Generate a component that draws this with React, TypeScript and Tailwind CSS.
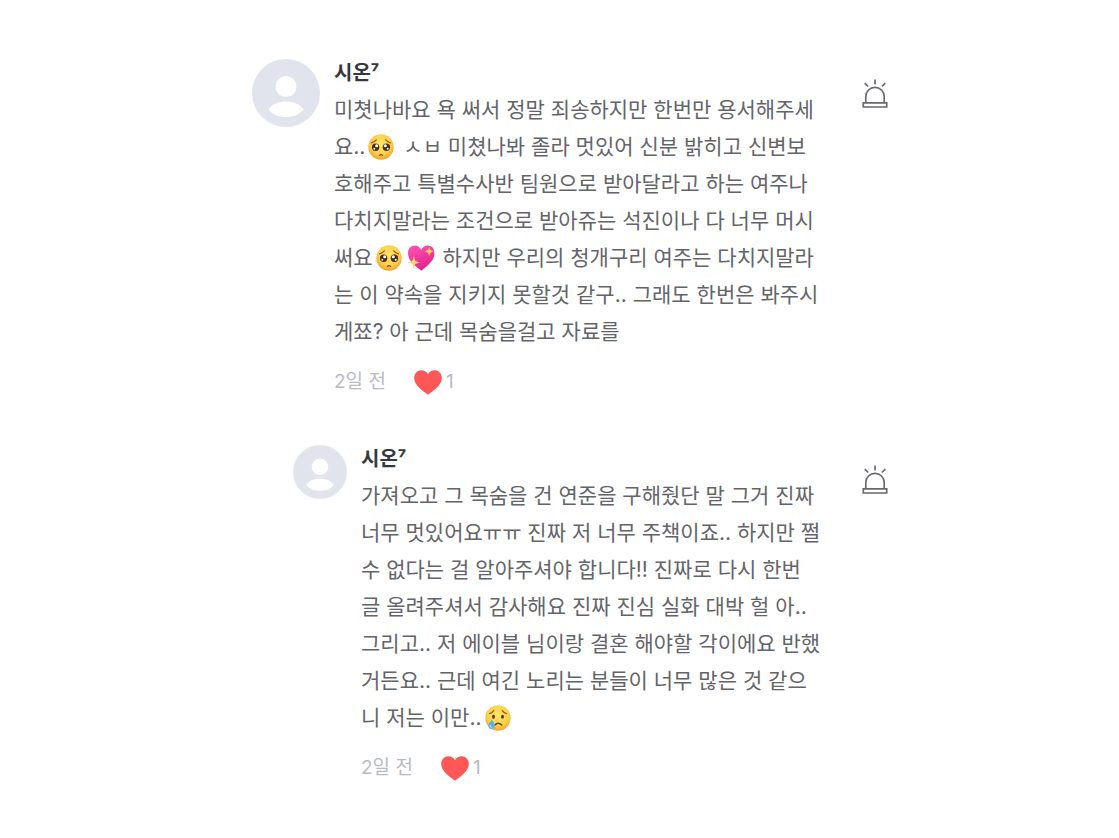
import type { ReactNode } from 'react';

/** Yellow face with pleading eyes */
function PleadingFace() {
  return (
    <svg
      viewBox="0 0 26 26"
      role="img"
      aria-label="애원하는 얼굴"
      className="mx-[3px] inline-block h-[26px] w-[26px] align-[-6px]"
    >
      <defs>
        <radialGradient id="pleading-skin" cx="0.5" cy="0.4" r="0.6">
          <stop offset="0" stopColor="#ffe56a" />
          <stop offset="0.65" stopColor="#ffd04a" />
          <stop offset="1" stopColor="#f0a02c" />
        </radialGradient>
      </defs>
      <circle cx="13" cy="13" r="12.7" fill="url(#pleading-skin)" />
      <path
        d="M3.5 8.8Q6.3 8.2 8.3 5.8M22.5 8.8Q19.7 8.2 17.7 5.8"
        fill="none"
        stroke="#8f5a1c"
        strokeWidth="1.2"
        strokeLinecap="round"
      />
      <circle cx="7.6" cy="13.3" r="3.7" fill="#4b2d14" />
      <circle cx="18.4" cy="13.3" r="3.7" fill="#4b2d14" />
      <circle cx="8.7" cy="11.8" r="1.5" fill="#fff" />
      <circle cx="17.3" cy="11.8" r="1.5" fill="#fff" />
      <circle cx="6.3" cy="14.8" r="1" fill="#fff" />
      <circle cx="19.7" cy="14.8" r="1" fill="#fff" />
      <path
        d="M11.4 21.4Q13 19.9 14.6 21.4"
        fill="none"
        stroke="#7a431a"
        strokeWidth="1.2"
        strokeLinecap="round"
      />
    </svg>
  );
}

/** Pink heart with two gold sparkles */
function SparklingHeart() {
  return (
    <svg
      viewBox="0 0 28 26"
      role="img"
      aria-label="반짝이는 하트"
      className="mx-0.5 inline-block h-[26px] w-[28px] align-[-6px]"
    >
      <defs>
        <linearGradient id="sparkle-fill" x1="0" y1="0" x2="0.4" y2="1">
          <stop offset="0" stopColor="#ff55b5" />
          <stop offset="1" stopColor="#e2248f" />
        </linearGradient>
      </defs>
      <path
        d="M14.3 25.8C11 22.6 1 17 1 8.4 1 3.6 4 .6 7.7.6c3 0 5.4 1.8 6.6 4.5C15.5 2.4 17.9.6 20.9.6c3.7 0 6.5 3 6.5 7.8 0 8.6-9.8 14.2-13.1 17.4z"
        fill="url(#sparkle-fill)"
      />
      <path
        d="M6.8 11.2l1.5 4.7 4.7 1.5-4.7 1.5-1.5 4.7-1.5-4.7-4.7-1.5 4.7-1.5z"
        fill="#ffd36b"
      />
      <path
        d="M22.2 1.8l1.4 3.1 3.1 1.4-3.1 1.4-1.4 3.1-1.4-3.1-3.1-1.4 3.1-1.4z"
        fill="#ffc45c"
      />
    </svg>
  );
}

/** Sad face with a tear on the left cheek */
function CryingFace() {
  return (
    <svg
      viewBox="0 0 26 26"
      role="img"
      aria-label="우는 얼굴"
      className="mx-[3px] inline-block h-[26px] w-[26px] align-[-6px]"
    >
      <defs>
        <radialGradient id="crying-skin" cx="0.5" cy="0.4" r="0.6">
          <stop offset="0" stopColor="#ffe56a" />
          <stop offset="0.65" stopColor="#ffd34a" />
          <stop offset="1" stopColor="#f0a62c" />
        </radialGradient>
      </defs>
      <circle cx="13" cy="13" r="12.7" fill="url(#crying-skin)" />
      <path
        d="M4.5 8.6Q7.2 7.8 8.7 5.6M21.5 8.6Q18.8 7.8 17.3 5.6"
        fill="none"
        stroke="#8f5a1c"
        strokeWidth="1.2"
        strokeLinecap="round"
      />
      <ellipse cx="8.5" cy="11.8" rx="1.5" ry="2" fill="#5b3a16" />
      <ellipse cx="17.5" cy="11.8" rx="1.5" ry="2" fill="#5b3a16" />
      <path
        d="M9.8 20Q13 16.5 16.8 20"
        fill="none"
        stroke="#6e4218"
        strokeWidth="1.5"
        strokeLinecap="round"
      />
      <path
        d="M6.8 14.5c1.5 2.3 3 4.2 3 6.3a3.2 3.2 0 0 1-6.4 0c0-2.1 1.9-4 3.4-6.3z"
        fill="#55b4e8"
      />
      <path d="M5.2 20.2a1.7 1.7 0 0 0 1.5 2.2" fill="none" stroke="#c9ecff" strokeWidth="1" />
    </svg>
  );
}

function Avatar({ className }: { className: string }) {
  return (
    <svg viewBox="0 0 68 68" aria-hidden="true" className={`shrink-0 ${className}`}>
      <circle cx="34" cy="34" r="34" fill="#e1e4ed" />
      <circle cx="34" cy="27.5" r="10.5" fill="#fff" />
      <path
        d="M16.5 50.5C19.5 45.5 26 42.5 34 42.5s14.5 3 17.5 8C47.5 55.5 41.5 58 34 58s-13.5-2.5-17.5-7.5z"
        fill="#fff"
      />
    </svg>
  );
}

function SirenIcon() {
  return (
    <svg
      viewBox="0 0 26 30"
      aria-hidden="true"
      className="h-[30px] w-[26px]"
      fill="none"
      stroke="#68686d"
      strokeWidth="1.7"
    >
      <path d="M13 .5v5M2.7 4.2l3.4 3.3M23.3 4.2l-3.4 3.3" />
      <path d="M3.8 23.8V17.500a9.2 9.2 0 0 1 18.4 0v6.3" />
      <path d="M1.3 23.8h23.4v4.2h-23.4z" />
    </svg>
  );
}

function HeartIcon() {
  return (
    <svg viewBox="0 0 28 25" aria-hidden="true" className="h-[25px] w-7" fill="#ff5656">
      <path d="M14 24.8C10.5 21.5.2 16 .2 8 .2 3.5 3.4.3 7.4.3c2.8 0 5.3 1.5 6.6 4C15.3 1.8 17.8.3 20.6.3c4 0 7.2 3.2 7.2 7.7 0 8-10.3 13.5-13.8 16.8z" />
    </svg>
  );
}

interface CommentProps {
  author: string;
  lines: ReactNode[];
  time: string;
  likes: number;
  isReply?: boolean;
}

function Comment({ author, lines, time, likes, isReply = false }: CommentProps) {
  return (
    <article className={`flex items-start gap-3.5 ${isReply ? 'pl-[41px]' : ''}`}>
      <Avatar className={isReply ? 'mt-0.5 h-[54px] w-[54px]' : 'mt-0.5 h-[68px] w-[68px]'} />

      <div className="min-w-0 flex-1">
        <h2 className="text-[20px] leading-8 font-bold text-[#37383f]">{author}</h2>
        <p className="mt-0.5 text-[21px] leading-[37px] text-[#636469]">
          {lines.map((line, index) => (
            <span key={index} className="block whitespace-nowrap">
              {line}
            </span>
          ))}
        </p>
        <div className="mt-[18px] flex items-center gap-7 text-[19px] leading-7 text-[#b9bac4]">
          <time>{time}</time>
          <button type="button" aria-label="좋아요" className="flex cursor-pointer items-center gap-1">
            <HeartIcon />
            <span>{likes}</span>
          </button>
        </div>
      </div>

      <button type="button" aria-label="신고" className="mt-[22px] shrink-0 cursor-pointer">
        <SirenIcon />
      </button>
    </article>
  );
}

const COMMENTS: CommentProps[] = [
  {
    author: '시온⁷',
    time: '2일 전',
    likes: 1,
    lines: [
      '미쳣나바요 욕 써서 정말 죄송하지만 한번만 용서해주세',
      <>요..<PleadingFace /> ㅅㅂ 미쳤나봐 졸라 멋있어 신분 밝히고 신변보</>,
      '호해주고 특별수사반 팀원으로 받아달라고 하는 여주나',
      '다치지말라는 조건으로 받아쥬는 석진이나 다 너무 머시',
      <>써요<PleadingFace /><SparklingHeart /> 하지만 우리의 청개구리 여주는 다치지말라</>,
      '는 이 약속을 지키지 못할것 같구.. 그래도 한번은 봐주시',
      '게쬬? 아 근데 목숨을걸고 자료를',
    ],
  },
  {
    author: '시온⁷',
    time: '2일 전',
    likes: 1,
    isReply: true,
    lines: [
      '가져오고 그 목숨을 건 연준을 구해줬단 말 그거 진짜',
      '너무 멋있어요ㅠㅠ 진짜 저 너무 주책이죠.. 하지만 쩔',
      '수 없다는 걸 알아주셔야 합니다!! 진짜로 다시 한번',
      '글 올려주셔서 감사해요 진짜 진심 실화 대박 헐 아..',
      '그리고.. 저 에이블 님이랑 결혼 해야할 각이에요 반했',
      '거든요.. 근데 여긴 노리는 분들이 너무 많은 것 같으',
      <>니 저는 이만..<CryingFace /></>,
    ],
  },
];

export default function App() {
  return (
    <main className="min-h-screen bg-white font-[Inter,'Noto_Sans_CJK_KR',sans-serif]">
      <div className="mx-auto flex max-w-[657px] flex-col gap-[47px] pt-[57px] pb-10 pl-[21px]">
        {COMMENTS.map((comment, index) => (
          <Comment key={index} {...comment} />
        ))}
      </div>
    </main>
  );
}
